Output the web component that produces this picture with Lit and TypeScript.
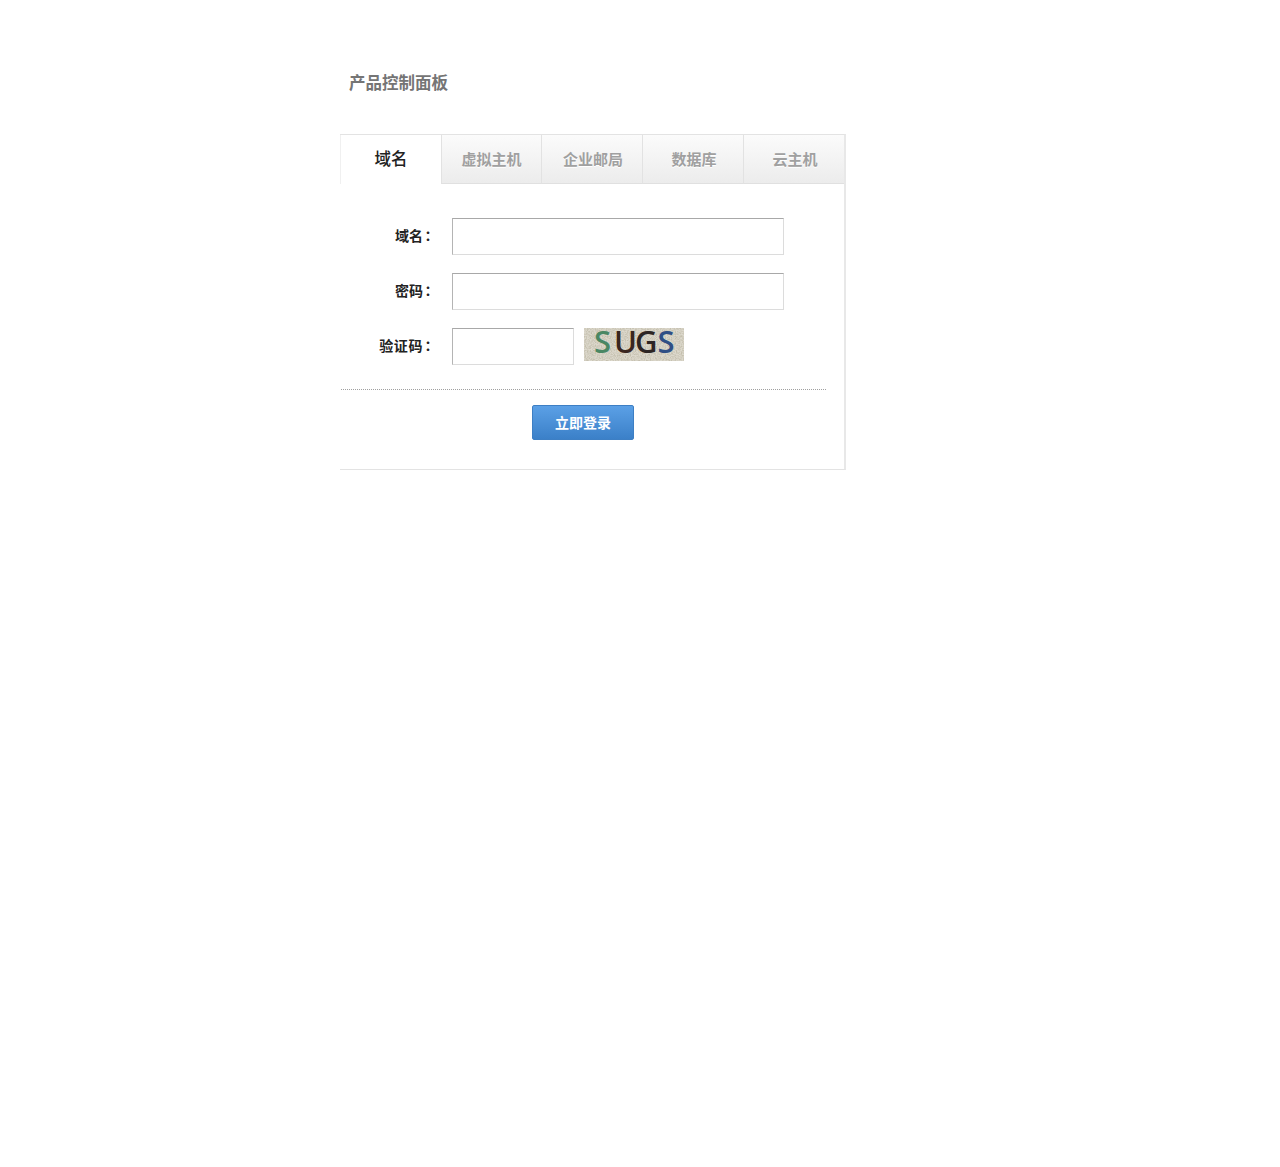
import { LitElement, html, css } from "lit";
import { customElement } from "lit/decorators.js";

@customElement("app-root")
export class AppRoot extends LitElement {
  static styles = css`
    :host {
      display: block;
      box-sizing: border-box;
      min-height: 1167px;
      background: #fff;
      padding: 72px 0 0 340px;
      font-family: "Noto Sans CJK SC", "Liberation Sans", sans-serif;
    }
    .title {
      margin: 0 0 40px 9px;
      height: 22px;
      line-height: 20px;
      font-size: 16.5px;
      font-weight: 700;
      color: #757575;
    }
    .panel {
      box-sizing: border-box;
      width: 506px;
      height: 336px;
      border-top: 1px solid #e3e3e3;
      border-right: 2px solid #e8e8e8;
      border-bottom: 1px solid #e3e3e3;
    }
    .tabs {
      display: grid;
      grid-template-columns: 101px 100px 101px 101px 101px;
      height: 49px;
    }
    .tab {
      box-sizing: border-box;
      display: flex;
      align-items: center;
      justify-content: center;
      padding-bottom: 2px;
      font-size: 15px;
      font-weight: 700;
      color: #a0a0a0;
      text-shadow: 0 1px 0 #fff;
      background: linear-gradient(#fbfbfb, #ececec);
      border-left: 1px solid #e2e2e2;
      border-bottom: 1px solid #e0e0e0;
    }
    .tab.shift {
      padding-left: 2px;
    }
    .tab.active {
      padding-bottom: 4px;
      font-size: 16.5px;
      font-weight: 500;
      color: #222;
      text-shadow: none;
      background: #fff;
      border-left: 1px solid #f0f0f0;
      border-bottom: 0;
    }
    .form {
      display: flex;
      flex-direction: column;
      gap: 18px;
      padding-top: 34px;
    }
    .row {
      display: flex;
      align-items: flex-start;
    }
    .label {
      box-sizing: border-box;
      width: 112px;
      height: 37px;
      padding-right: 15px;
      line-height: 35px;
      text-align: right;
      font-size: 14px;
      font-weight: 700;
      color: #222;
      white-space: nowrap;
    }
    .label.wide {
      letter-spacing: 0.6px;
    }
    .colon {
      margin: 0 2px 0 -2px;
      letter-spacing: 0;
      font-family: "Noto Sans CJK TC", "Noto Sans CJK SC", sans-serif;
    }
    .input {
      box-sizing: border-box;
      display: block;
      width: 332px;
      height: 37px;
      padding: 0 6px;
      margin: 0;
      outline: 0;
      background: #fff;
      border: 1px solid #dcdcdc;
      border-top-color: #a8a8a8;
      border-left-color: #b4b4b4;
      border-radius: 0;
    }
    .input.short {
      width: 122px;
    }
    .captcha {
      display: block;
      margin-left: 10px;
      width: 100px;
      height: 33px;
      overflow: visible;
    }
    .captcha text {
      font-family: "Open Sans", "Liberation Sans", sans-serif;
      font-size: 31px;
      font-weight: 600;
    }
    .footer {
      margin: 24px 18px 0 1px;
      padding: 15px 1px 0 0;
      border-top: 1px dotted #a0a0a0;
      display: flex;
      justify-content: center;
    }
    .btn {
      box-sizing: border-box;
      width: 102px;
      height: 35px;
      padding: 0 0 2px;
      border: 1px solid #3d7fc4;
      border-radius: 2px;
      background: linear-gradient(#5ba0e6, #3b80c8);
      color: #fff;
      font-family: inherit;
      font-size: 14px;
      font-weight: 700;
    }
  `;

  render() {
    return html`
      <div class="title">产品控制面板</div>
      <div class="panel">
        <div class="tabs">
          <div class="tab active">域名</div>
          <div class="tab">虚拟主机</div>
          <div class="tab shift">企业邮局</div>
          <div class="tab shift">数据库</div>
          <div class="tab shift">云主机</div>
        </div>
        <div class="form">
          <div class="row">
            <div class="label">域名<span class="colon">：</span></div>
            <input class="input" type="text" />
          </div>
          <div class="row">
            <div class="label">密码<span class="colon">：</span></div>
            <input class="input" type="text" />
          </div>
          <div class="row">
            <div class="label wide">验证码<span class="colon">：</span></div>
            <input class="input short" type="text" />
            <svg class="captcha" viewBox="0 0 100 33" aria-label="SUGS">
              <defs>
                <filter id="noise" x="0" y="0" width="100%" height="100%">
                  <feTurbulence type="fractalNoise" baseFrequency="0.8" numOctaves="2" seed="4" />
                  <feColorMatrix
                    type="matrix"
                    values="0 0 0 0 0.55  0 0 0 0 0.52  0 0 0 0 0.42  2.4 0 0 0 -0.85"
                  />
                </filter>
              </defs>
              <rect width="100" height="33" fill="#dcd8cc" />
              <rect width="100" height="33" filter="url(#noise)" />
              <text x="10" y="25" fill="#4a8763">S</text>
              <text x="30" y="25" letter-spacing="-2"><tspan fill="#3a2620">U</tspan><tspan fill="#2e2624">G</tspan><tspan fill="#2f4f85" dx="2">S</tspan></text>
            </svg>
          </div>
        </div>
        <div class="footer"><button class="btn">立即登录</button></div>
      </div>
    `;
  }
}
